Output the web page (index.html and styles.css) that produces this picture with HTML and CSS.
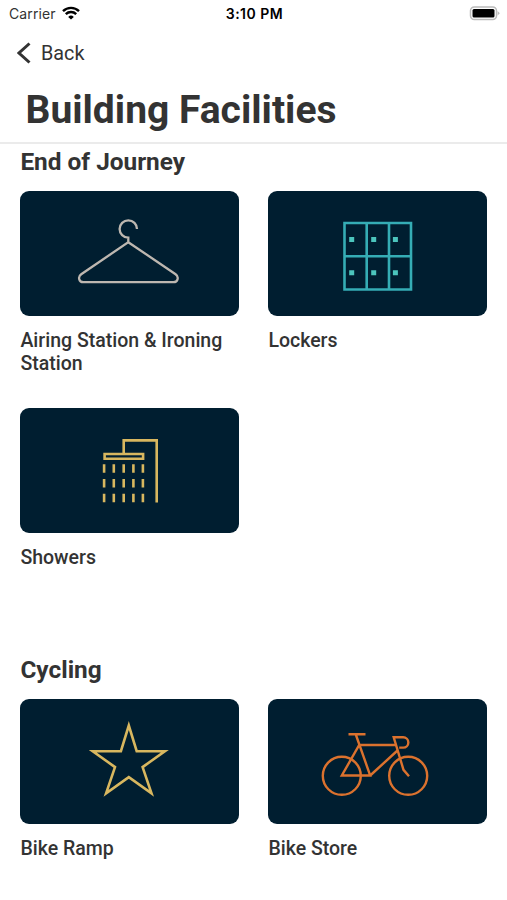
FILE: index.html
```html
<!DOCTYPE html>
<html lang="en">
<head>
    <meta charset="UTF-8">
    <meta name="viewport" content="width=device-width, initial-scale=1.0">
    <title>Building Facilities</title>
    <link rel="stylesheet" href="styles.css">
</head>
<body>
    <div class="status-bar">
        <div class="carrier">
            <span>Carrier</span>
            <svg class="wifi" viewBox="0 0 18 14">
                <path d="M1 5.2a11.4 11.4 0 0 1 16 0" />
                <path d="M3.8 8.1a7.4 7.4 0 0 1 10.4 0" />
                <path class="wifi-dot" d="M9 13.6L6.2 10.9a4 4 0 0 1 5.6 0z" />
            </svg>
        </div>
        <span class="time">3:10 PM</span>
        <svg class="battery" viewBox="0 0 31 15">
            <rect class="battery-shell" x="1.5" y="1" width="26" height="12.6" rx="3.8" />
            <rect class="battery-level" x="3.5" y="3" width="22" height="8.6" rx="1.5" />
            <path class="battery-cap" d="M28.6 5l2.2 2.3-2.2 2.3z" />
        </svg>
    </div>

    <header class="header">
        <a class="back">
            <svg class="chevron" viewBox="0 0 14 22"><path d="M12.5 1.5L2 11l10.5 9.5" /></svg>
            <span>Back</span>
        </a>
        <h1 class="title">Building Facilities</h1>
    </header>

    <main class="content">
        <section class="group">
            <h2 class="group-title">End of Journey</h2>
            <div class="grid">
                <div class="item">
                    <svg class="card silver" viewBox="0 0 219 125">
                        <path d="M117 38a8.7 8.7 0 1 0-8.7 8.7V51.2L61.2 83.2C57.6 85.8 58.8 91.2 63.4 91.2h90c4.6 0 5.8-5.4 2.2-8L108.3 51.2" />
                    </svg>
                    <p class="label">Airing Station &amp; Ironing Station</p>
                </div>
                <div class="item">
                    <svg class="card teal" viewBox="0 0 219 125">
                        <path d="M76.5 32h66.5v66.5H76.5zM98.7 32v66.5M121 32v66.5M76.5 65.2h66.5" />
                        <path class="dots" d="M81.2 46h5v5h-5zM103.2 46h5v5h-5zM124.9 46h5v5h-5zM81.2 79.3h5v5h-5zM103.2 79.3h5v5h-5zM124.9 79.3h5v5h-5z" />
                    </svg>
                    <p class="label">Lockers</p>
                </div>
                <div class="item">
                    <svg class="card gold" viewBox="0 0 219 125">
                        <path d="M84.6 46h38.5v4.8H84.6zM103.7 46V32.4h33V94.5" />
                        <path d="M84.1 56.3v8.5M93.8 56.3v8.5M103.7 56.3v8.5M113.4 56.3v8.5M122.9 56.3v8.5" />
                        <path d="M84.1 71v8.5M93.8 71v8.5M103.7 71v8.5M113.4 71v8.5M122.9 71v8.5" />
                        <path d="M84.1 85.8v8.5M93.8 85.8v8.5M103.7 85.8v8.5M113.4 85.8v8.5M122.9 85.8v8.5" />
                    </svg>
                    <p class="label">Showers</p>
                </div>
            </div>
        </section>

        <section class="group">
            <h2 class="group-title">Cycling</h2>
            <div class="grid">
                <div class="item">
                    <svg class="card gold" viewBox="0 0 219 125">
                        <path d="M108.8 26.5L116.7 52.2H144.8L122.6 68.1L131.5 94.4L108.8 78.2L86.1 94.4L95 68.1L72.8 52.2H100.9z" />
                    </svg>
                    <p class="label">Bike Ramp</p>
                </div>
                <div class="item">
                    <svg class="card orange" viewBox="0 0 219 125">
                        <circle cx="73.8" cy="76.8" r="19" />
                        <circle cx="140.2" cy="76.8" r="19" />
                        <path d="M80.5 35.2h17M87.8 35.5l14.4 41H73.8L91.2 46H128.5M102.2 76.5L129.5 51.5" />
                        <path d="M141 77.2L135.5 70.8L125.7 38.3h9.5a5.1 5.1 0 0 1 0 10.3h-4" />
                    </svg>
                    <p class="label">Bike Store</p>
                </div>
            </div>
        </section>
    </main>
</body>
</html>
```
FILE: styles.css
```css
* {
    margin: 0;
    padding: 0;
    box-sizing: border-box;
}

body {
    background-color: #fff;
    color: #333;
    font-family: Roboto, sans-serif;
}

.status-bar {
    display: grid;
    grid-template-columns: 1fr auto 1fr;
    align-items: center;
    height: 27px;
    padding: 0 7px 0 9px;
    color: #000;
    font-family: Inter, sans-serif;
    font-size: 14px;
}

.carrier {
    display: flex;
    align-items: center;
    gap: 6px;
    color: #333;
    letter-spacing: 0.1px;
}

.wifi {
    width: 18px;
    height: 14px;
    margin-top: -2px;
    fill: none;
    stroke: #000;
    stroke-width: 2.4;
}

.wifi .wifi-dot {
    fill: #000;
    stroke: none;
}

.time {
    font-weight: 600;
    letter-spacing: 0.5px;
}

.battery {
    width: 31px;
    height: 15px;
    justify-self: end;
}

.battery-shell {
    fill: #fff;
    stroke: #bbb;
    stroke-width: 1.5;
}

.battery-level {
    fill: #000;
}

.battery-cap {
    fill: #bbb;
}

.header {
    height: 117px;
    border-bottom: 2px solid #ebebeb;
}

.back {
    display: flex;
    align-items: center;
    gap: 10px;
    height: 52px;
    padding-left: 17px;
    font-size: 19.8px;
}

.chevron {
    width: 14px;
    height: 22px;
    fill: none;
    stroke: #333;
    stroke-width: 3;
}

.title {
    padding-left: 25.5px;
    font-size: 39px;
    font-weight: 700;
    line-height: 62px;
}

.content {
    padding: 2px 19.6px 0 20.4px;
}

.group {
    margin-bottom: 84.6px;
}

.group:last-child {
    margin-bottom: 0;
}

.group-title {
    margin-bottom: 14.4px;
    font-size: 24.4px;
    font-weight: 700;
    line-height: 31px;
}

.grid {
    display: grid;
    grid-template-columns: 219px 219px;
    gap: 33.4px 29px;
}

.card {
    display: block;
    width: 219px;
    height: 125px;
    border-radius: 9px;
    background-color: #001e30;
    fill: none;
    stroke-width: 2.6;
    stroke-miterlimit: 10;
}

.silver {
    stroke: #bdb7b0;
    stroke-width: 2.3;
}

.teal {
    stroke: #35adb5;
}

.dots {
    fill: #4cc5bd;
    stroke: none;
}

.gold {
    stroke: #d8b75f;
}

.orange {
    stroke: #db722e;
    stroke-width: 2.4;
}

.label {
    padding-top: 12.6px;
    font-size: 19.5px;
    font-weight: 500;
    line-height: 23px;
}
```
